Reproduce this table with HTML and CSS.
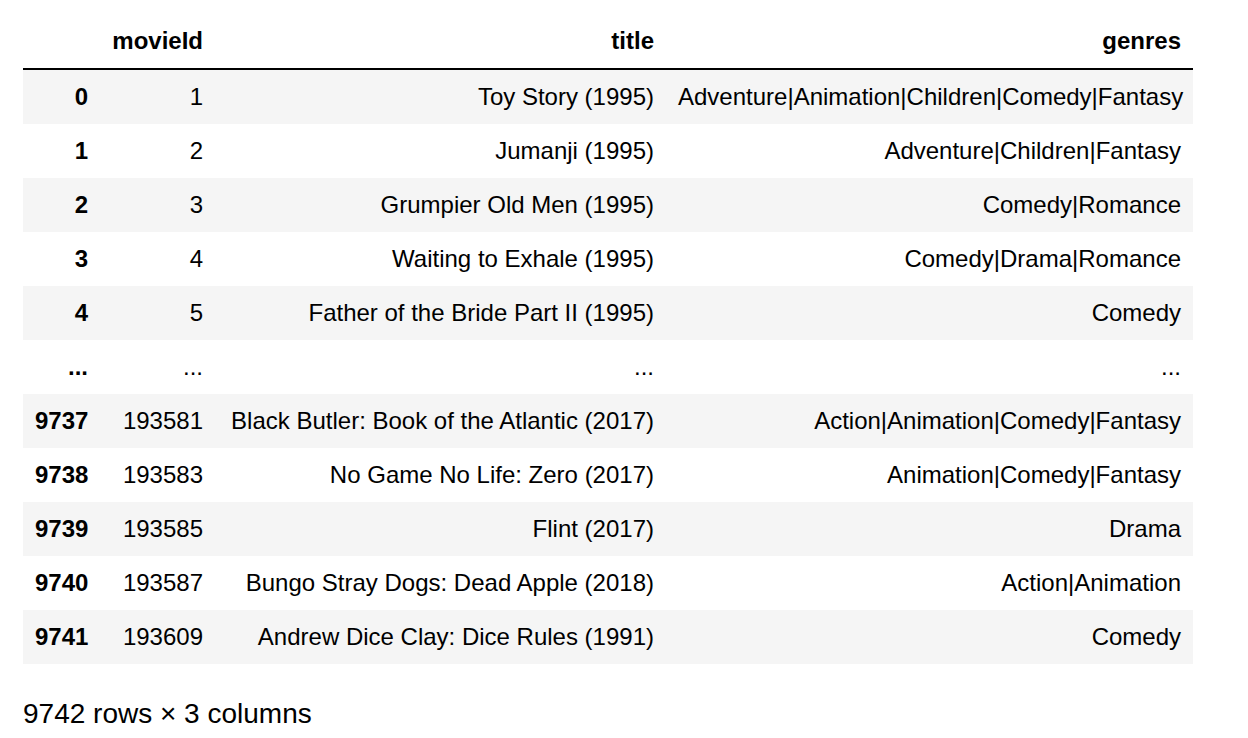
FILE: index.html
```html
<!DOCTYPE html>
<html>
<head>
<meta charset="utf-8">
<link rel="stylesheet" href="styles.css">
</head>
<body>
<div class="output">
  <table class="dataframe">
    <colgroup>
      <col class="c-idx">
      <col class="c-id">
      <col class="c-title">
      <col class="c-genres">
    </colgroup>
    <thead>
      <tr>
        <th class="idx"></th>
        <th>movieId</th>
        <th>title</th>
        <th>genres</th>
      </tr>
    </thead>
    <tbody>
      <tr class="odd"><th class="idx">0</th><td>1</td><td>Toy Story (1995)</td><td>Adventure|Animation|Children|Comedy|Fantasy</td></tr>
      <tr><th class="idx">1</th><td>2</td><td>Jumanji (1995)</td><td>Adventure|Children|Fantasy</td></tr>
      <tr class="odd"><th class="idx">2</th><td>3</td><td>Grumpier Old Men (1995)</td><td>Comedy|Romance</td></tr>
      <tr><th class="idx">3</th><td>4</td><td>Waiting to Exhale (1995)</td><td>Comedy|Drama|Romance</td></tr>
      <tr class="odd"><th class="idx">4</th><td>5</td><td>Father of the Bride Part II (1995)</td><td>Comedy</td></tr>
      <tr><th class="idx">...</th><td>...</td><td>...</td><td>...</td></tr>
      <tr class="odd"><th class="idx">9737</th><td>193581</td><td>Black Butler: Book of the Atlantic (2017)</td><td>Action|Animation|Comedy|Fantasy</td></tr>
      <tr><th class="idx">9738</th><td>193583</td><td>No Game No Life: Zero (2017)</td><td>Animation|Comedy|Fantasy</td></tr>
      <tr class="odd"><th class="idx">9739</th><td>193585</td><td>Flint (2017)</td><td>Drama</td></tr>
      <tr><th class="idx">9740</th><td>193587</td><td>Bungo Stray Dogs: Dead Apple (2018)</td><td>Action|Animation</td></tr>
      <tr class="odd"><th class="idx">9741</th><td>193609</td><td>Andrew Dice Clay: Dice Rules (1991)</td><td>Comedy</td></tr>
    </tbody>
  </table>
  <p class="shape">9742 rows × 3 columns</p>
</div>
</body>
</html>
```

FILE: styles.css
```css
html, body {
  margin: 0;
  padding: 0;
  background: #ffffff;
}

body {
  font-family: "Liberation Sans", Arial, Helvetica, sans-serif;
  color: #000000;
}

.output {
  padding: 14px 0 0 23px;
}

.dataframe {
  border-collapse: separate;
  border-spacing: 0;
  table-layout: fixed;
  width: 1170px;
  font-size: 24px;
  line-height: 30px;
}

.c-idx { width: 77px; }
.c-id { width: 115px; }
.c-title { width: 451px; }
.c-genres { width: 527px; }

.dataframe th,
.dataframe td {
  padding: 12px 12px;
  text-align: right;
  vertical-align: middle;
  white-space: nowrap;
}

.dataframe th {
  font-weight: bold;
}

.dataframe td {
  font-weight: normal;
}

.dataframe thead th {
  border-bottom: 2px solid #000000;
}

.dataframe tbody tr.odd {
  background: #f5f5f5;
}

.shape {
  margin: 34px 0 0 0;
  font-size: 28px;
  line-height: 32px;
}
```
